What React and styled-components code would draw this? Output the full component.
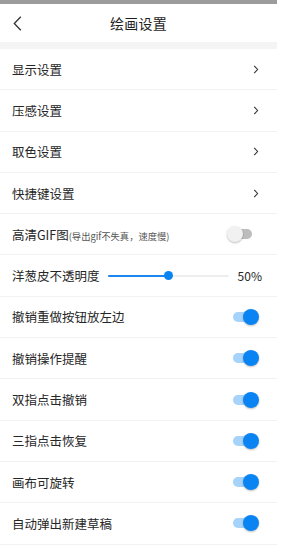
import styled, { createGlobalStyle } from "styled-components"

const GlobalStyle = createGlobalStyle`
  html, body {
    margin: 0;
    padding: 0;
    background: #ffffff;
  }
  body {
    font-family: "Noto Sans CJK SC", "Noto Sans", sans-serif;
    color: #222222;
  }
`

const Page = styled.div`
  width: 277px;
  background: #ffffff;
`

const StatusBar = styled.div`
  height: 4px;
  background: #9c9c9c;
`

const Header = styled.div`
  height: 38px;
  display: flex;
  align-items: center;
  justify-content: center;
  position: relative;
`

const BackButton = styled.div`
  position: absolute;
  left: 11px;
  top: 11px;
  width: 12px;
  height: 16px;
  display: flex;
  align-items: center;
  justify-content: center;
`

const Title = styled.div`
  font-size: 14px;
  color: #1e1e1e;
  letter-spacing: 0.3px;
`

const Gap = styled.div`
  height: 7px;
  background: #f4f4f4;
`

const Row = styled.div`
  height: 40.3px;
  border-bottom: 1px solid #f2f2f2;
  display: flex;
  align-items: center;
  padding: 0 18px 0 12px;
`

const Label = styled.div`
  font-size: 12.5px;
  color: #262626;
  flex: ${(p) => (p.$grow ? "1" : "none")};
  white-space: nowrap;
`

const Hint = styled.span`
  font-size: 9.3px;
  color: #555555;
`

const Chevron = () => (
  <svg width="6" height="9" viewBox="0 0 6 9">
    <path d="M1.2 0.8 L4.6 4.5 L1.2 8.2" fill="none" stroke="#333" strokeWidth="1.1" />
  </svg>
)

const Track = styled.div`
  position: relative;
  width: 19px;
  height: 10px;
  border-radius: 5px;
  background: ${(p) => (p.$on ? "#a6d3fa" : "#bdbdbd")};
  margin-right: 7px;
`

const Knob = styled.div`
  position: absolute;
  top: -3px;
  left: ${(p) => (p.$on ? "10px" : "-6px")};
  width: 16px;
  height: 16px;
  border-radius: 50%;
  background: ${(p) => (p.$on ? "#0b84f3" : "#f1f1f1")};
  box-shadow: 0 1px 2px rgba(0, 0, 0, 0.25);
`

const Switch = ({ on }) => (
  <Track $on={on}>
    <Knob $on={on} />
  </Track>
)

const Slider = styled.div`
  position: relative;
  width: 121px;
  height: 2px;
  margin-left: 8px;
  background: #eeeeee;
  border-radius: 1px;
`

const SliderFill = styled.div`
  height: 100%;
  background: #1b87ef;
  border-radius: 1px;
`

const Thumb = styled.div`
  position: absolute;
  top: -4px;
  width: 9px;
  height: 9px;
  margin-left: -4px;
  border-radius: 50%;
  background: #0b84f3;
`

const Value = styled.div`
  margin-left: auto;
  font-size: 12px;
  color: #262626;
  margin-right: -3px;
`

const links = ["显示设置", "压感设置", "取色设置", "快捷键设置"]
const toggles = [
  "撤销重做按钮放左边",
  "撤销操作提醒",
  "双指点击撤销",
  "三指点击恢复",
  "画布可旋转",
  "自动弹出新建草稿",
]

export default function App() {
  const opacity = 50
  return (
    <Page>
      <GlobalStyle />
      <StatusBar />
      <Header>
        <BackButton>
          <svg width="9" height="15" viewBox="0 0 9 15">
            <path d="M7.8 0.8 L1.3 7.5 L7.8 14.2" fill="none" stroke="#333" strokeWidth="1.3" />
          </svg>
        </BackButton>
        <Title>绘画设置</Title>
      </Header>
      <Gap />
      {links.map((t) => (
        <Row key={t}>
          <Label $grow>{t}</Label>
          <Chevron />
        </Row>
      ))}
      <Row>
        <Label $grow>
          高清GIF图<Hint>(导出gif不失真，速度慢)</Hint>
        </Label>
        <Switch on={false} />
      </Row>
      <Row>
        <Label>洋葱皮不透明度</Label>
        <Slider>
          <SliderFill style={{ width: `${opacity}%` }} />
          <Thumb style={{ left: `${opacity}%` }} />
        </Slider>
        <Value>{opacity}%</Value>
      </Row>
      {toggles.map((t) => (
        <Row key={t}>
          <Label $grow>{t}</Label>
          <Switch on />
        </Row>
      ))}
    </Page>
  )
}
